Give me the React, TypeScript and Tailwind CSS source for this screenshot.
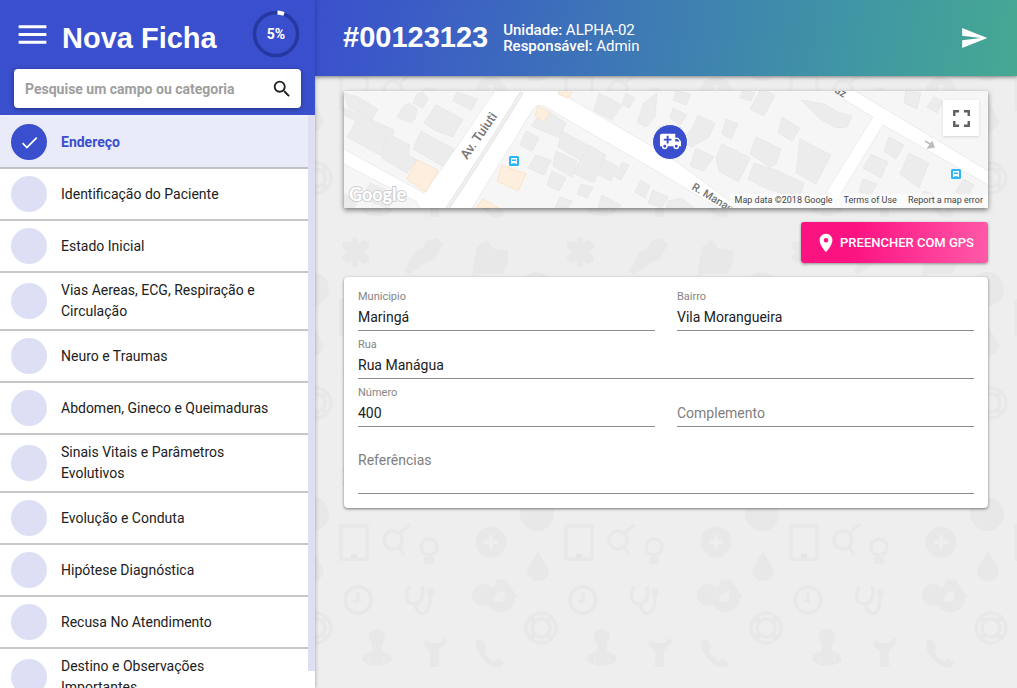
import { useState } from "react"
import { MdCheck, MdFullscreen, MdMenu, MdPlace, MdSearch } from "react-icons/md"

const categories = [
  "Endereço",
  "Identificação do Paciente",
  "Estado Inicial",
  "Vias Aereas, ECG, Respiração e Circulação",
  "Neuro e Traumas",
  "Abdomen, Gineco e Queimaduras",
  "Sinais Vitais e Parâmetros Evolutivos",
  "Evolução e Conduta",
  "Hipótese Diagnóstica",
  "Recusa No Atendimento",
  "Destino e Observações Importantes",
]

const buildings = [
  "0,17 16,24 50,39 42,65 34,63 3,46 12,30 0,24",
  "0,2 14,6 34,18 28,29 4,16",
  "44,43 66,54 64,64 73,69 63,82 38,67 38,60",
  "59,16 65,12 73,18 71,28 67,32 53,26",
  "73,3 79,1 84,8 79,17 69,12",
  "92,14 119,28 113,38 109,46 92,40 80,32",
  "77,40 110,58 100,76 69,58",
  "113,1 134,8 127,19 109,10",
  "26,92 40,98 52,107 44,117 18,108",
  "0,103 14,110 10,117 0,117",
  "192,28 203,20 222,32 216,47 187,35",
  "218,40 247,56 238,70 214,56",
  "182,40 195,47 188,60 176,54",
  "192,64 207,69 200,84 184,77",
  "212,60 233,70 228,86 209,75",
  "245,54 262,64 250,92 229,82",
  "208,80 222,87 215,100 203,94",
  "260,68 274,76 267,90 255,84",
  "278,72 285,74 277,89 271,86",
  "237,93 249,96 243,107 233,103",
  "216,106 228,110 224,117 211,117",
  "258,104 277,114 275,117 254,117",
  "297,89 306,95 301,107 291,101",
  "309,99 324,106 318,117 304,112",
  "255,2 278,14 268,29 250,20",
  "282,2 291,7 285,17 278,13",
  "300,12 313,2 311,26 302,36 293,31",
  "332,0 347,3 342,14 329,9",
  "329,17 343,24 336,34 326,27",
  "354,24 371,32 365,46 348,56 338,51 348,37",
  "382,28 394,33 387,48 378,43",
  "378,53 406,67 399,82 394,91 375,80 372,67",
  "352,57 370,66 359,80 346,75",
  "417,-2 431,4 420,25 406,18",
  "399,-2 411,2 407,10 396,7",
  "438,26 456,37 448,50 434,42",
  "457,9 480,13 494,21 508,25 503,36 492,37 476,28",
  "412,46 437,58 432,73 426,76 406,63",
  "456,48 487,64 472,93 452,82",
  "410,72 432,79 460,92 455,108 424,98 404,88",
  "527,63 544,71 537,87 519,77",
  "545,46 560,54 552,68 540,60",
  "565,62 585,72 575,97 556,83",
  "519,88 533,93 526,106 515,100",
  "580,100 600,108 595,117 570,114",
  "562,-2 577,2 573,18 560,12",
  "590,6 599,10 593,22 583,16",
  "620,88 630,94 622,107 611,101",
  "324,110 338,107 350,117 322,117",
]

const shops = ["73,69 94,79 82,101 63,88", "158,74 182,83 174,100 153,90", "194,15 206,21 200,31 191,25", "139,108 155,117 132,117", "217,-1 229,-1 224,7 214,3"]

function MapDrawing() {
  return (
    <svg viewBox="0 0 644 117" preserveAspectRatio="xMidYMid slice" className="block h-full w-full" aria-hidden="true">
      <rect width="644" height="117" fill="#f6f6f6" />
      <g fill="#ececec" stroke="#e5e5e5" strokeWidth="0.7">
        {buildings.map((points) => (
          <polygon key={points} points={points} />
        ))}
      </g>
      <g fill="#fff" stroke="#e8e8e8" strokeWidth="0.8">
        <path d="M-2 57L80 102L99 76L152 -2H210L326 66L398 119H378L316 82L203 17Q193 10 188 20L127 119H76L73 111L-2 72Z" />
        <path d="M483 -2H508L646 81V95L539 34L487 119H471L529 26Z" />
      </g>
      <path d="M103 118Q145 55 178 1" stroke="#e2e2e2" strokeWidth="4" fill="none" />
      <path d="M103 118Q145 55 178 1" stroke="#f0f0f0" strokeWidth="2.5" fill="none" />
      <g fill="#fdeedd" stroke="#fadfc2" strokeWidth="0.8">
        {shops.map((points) => (
          <polygon key={points} points={points} />
        ))}
      </g>
      <g fill="#757575" fontFamily="Roboto, sans-serif" fontWeight="500" stroke="#fff" strokeWidth="2" paintOrder="stroke">
        <text transform="translate(123 69) rotate(-55)" fontSize="13">Av. Tuiuti</text>
        <text transform="translate(347 98) rotate(31)" fontSize="11">R. Manag</text>
        <text transform="translate(490 1) rotate(31)" fontSize="11">az</text>
      </g>
      <path d="M581 50L586 53M588 51L590 56L584 57Z" stroke="#bdbdbd" strokeWidth="1.5" fill="#bdbdbd" />
      {[
        [165, 65],
        [607, 78],
      ].map(([x, y]) => (
        <g key={x} transform={`translate(${x} ${y})`}>
          <rect width="10" height="10" rx="1.5" fill="#29b6f6" />
          <path d="M2 2H8V8H6.8V7.2H3.2V8H2Z" fill="#fff" />
          <path d="M3 3.500H7V5H3Z" fill="#29b6f6" />
        </g>
      ))}
      <text x="5" y="110" fontSize="18" fontFamily="Lato, sans-serif" fontWeight="700" fill="#fff" stroke="#cfcfcf" strokeWidth="2" paintOrder="stroke">Google</text>
    </svg>
  )
}

function Backdrop() {
  return (
    <svg className="pointer-events-none absolute inset-0 h-full w-full" aria-hidden="true">
      <defs>
        <pattern id="medical" x="23" y="223" width="225" height="225" patternUnits="userSpaceOnUse">
          <g fill="#e8e8e8">
            <path d="M14 15H20L19 21L25 17L31 20V25L26 29L31 34V39L25 41L19 37L20 44H14L15 37L9 40L4 37V33L9 29L4 24V19L10 18L15 21Z" />
            <path d="M99 15L105 21L97 36L88 40L70 52L66 48L76 30L85 24L89 18Z" />
            <path d="M139 24L149 17L155 25L170 28V38L165 51H143L134 54L136 40Z" />
            <circle cx="199" cy="66" r="17" />
            <circle cx="153" cy="94" r="15.500" />
            <path d="M200 103L211 122A11 11 0 1 1 189 122Z" />
            <circle cx="145" cy="147" r="11" />
            <circle cx="163" cy="150" r="14" />
            <path d="M158 131L168 132L179 148L168 161H152Z" />
            <circle cx="39" cy="189" r="8" />
            <path d="M34 195H44V203Q54 205 54 213Q47 218 39 218Q30 218 24 213Q24 205 34 203Z" />
            <path d="M87 192L93 195H100L107 190L109 194L101 203V219H92V203L85 197Z" />
            <path d="M138 194Q143 188 146 194L148 200L146 204Q150 210 156 213L160 210L166 214L164 219Q153 222 145 211Q137 203 138 194Z" />
            <path d="M86 109H96V116H86Z" />
          </g>
          <g fill="none" stroke="#e8e8e8" strokeWidth="3.500">
            <rect x="3" y="78" width="26" height="33" />
            <circle cx="55" cy="92" r="9" />
            <path d="M62 85L72 76M61 99L66 107" />
            <circle cx="91" cy="99" r="8" />
            <circle cx="20" cy="152" r="13" />
            <path d="M20 144V153H15" />
            <path d="M71 138Q64 156 77 156Q87 154 84 138M77 156Q80 168 87 165Q93 160 92 147" />
            <circle cx="92" cy="144" r="2" />
            <circle cx="203" cy="180" r="15" />
            <circle cx="203" cy="180" r="9" />
            <path d="M192 169L198 175M208 185L214 191M192 191L198 185M208 175L214 169" strokeWidth="5" />
          </g>
          <path d="M151 87H155V92H160V96H155V101H151V96H146V92H151Z" fill="#eee" />
          <path d="M158 146L167 143L165 153H156ZM32 208V215M46 208V215" fill="#eee" stroke="#eee" />
          <path d="M13 106H19V110H13Z" fill="#e5e5e5" />
        </pattern>
      </defs>
      <rect width="100%" height="100%" fill="url(#medical)" />
    </svg>
  )
}

function AmbulanceIcon() {
  return (
    <svg viewBox="0 0 24 24" width="23" height="23" fill="currentColor" aria-hidden="true">
      <path d="M18,18.5A1.5,1.5 0 0,0 19.5,17A1.5,1.5 0 0,0 18,15.5A1.5,1.5 0 0,0 16.5,17A1.5,1.5 0 0,0 18,18.5M19.5,9.5H17V12H21.46L19.5,9.5M6,18.5A1.5,1.5 0 0,0 7.5,17A1.5,1.5 0 0,0 6,15.5A1.5,1.5 0 0,0 4.5,17A1.5,1.5 0 0,0 6,18.5M20,8L23,12V17H21A3,3 0 0,1 18,20A3,3 0 0,1 15,17H9A3,3 0 0,1 6,20A3,3 0 0,1 3,17H1V6C1,4.89 1.89,4 3,4H17V8H20M8,6V9H5V11H8V14H10V11H13V9H10V6H8Z" />
    </svg>
  )
}

function SendIcon() {
  return (
    <svg viewBox="0 0 24 24" width="28" height="28" fill="currentColor" aria-hidden="true">
      <path d="M1 3.500L22.500 12L1 20.500V14L17 12L1 10Z" />
    </svg>
  )
}

interface FieldProps {
  id: string
  label: string
  value?: string
  wide?: boolean
}

function Field({ id, label, value, wide }: FieldProps) {
  return (
    <div className={wide ? "col-span-2 pt-2" : "pt-2"}>
      {value ? (
        <label htmlFor={id} className="block h-3 text-[11px] leading-3 text-[#858585]">
          {label}
        </label>
      ) : (
        <div className="h-3" />
      )}
      <input
        id={id}
        defaultValue={value}
        placeholder={label}
        aria-label={label}
        className="block h-7 w-full border-b border-[#8c8c8c] bg-transparent text-sm text-[#212121] outline-none placeholder:text-[#808080]"
      />
    </div>
  )
}

function Sidebar() {
  const [active, setActive] = useState("Endereço")

  return (
    <aside className="z-20 flex h-full w-[315px] shrink-0 flex-col bg-white shadow-[0_0_4px_rgba(0,0,0,0.35)]">
      <div className="shrink-0 bg-[#3a4fcd] px-[14px] pt-[10px] pb-[7px]">
        <div className="flex h-12 items-center">
          <button aria-label="Menu" className="text-white">
            <MdMenu size={37} />
          </button>
          <h1 className="ml-[11px] pt-2 font-['Liberation_Sans'] text-[29px] leading-9 font-bold text-white">Nova Ficha</h1>
          <div className="relative mr-[1px] ml-auto flex h-12 w-12 items-center justify-center">
            <svg viewBox="0 0 48 48" className="absolute inset-0" aria-hidden="true">
              <circle cx="24" cy="24" r="21.500" fill="none" stroke="#26389f" strokeWidth="3.500" />
              <path d="M25.500 2.600A21.500 21.500 0 0 1 32 4" fill="none" stroke="#fff" strokeWidth="4" />
            </svg>
            <span className="relative text-sm font-bold text-white">5%</span>
          </div>
        </div>
        <div className="mt-[11px] flex h-[39px] items-center rounded-sm bg-white pr-2 pl-[11px] shadow-[0_1px_4px_rgba(0,0,0,0.4)]">
          <input
            type="search"
            aria-label="Pesquise um campo ou categoria"
            placeholder="Pesquise um campo ou categoria"
            className="min-w-0 flex-1 text-sm font-bold outline-none placeholder:text-[#9e9e9e]"
          />
          <button aria-label="Pesquisar" className="text-[#212121]">
            <MdSearch size={22} />
          </button>
        </div>
      </div>
      <div className="flex min-h-0 flex-1">
        <ul className="min-w-0 flex-1 overflow-y-auto border-t-2 border-[#eceef9] [scrollbar-width:none]">
          {categories.map((name) => (
            <li key={name}>
              <button
                onClick={() => setActive(name)}
                className={
                  name === active
                    ? "flex min-h-[52px] w-full items-center gap-[14px] border-b-2 border-[#bfc1c6] bg-[#e9ebf8] px-[11px] py-[7px] text-left font-bold text-[#3a4fcd]"
                    : "flex min-h-[52px] w-full items-center gap-[14px] border-b-2 border-[#c6c7ca] px-[11px] py-[7px] text-left text-[#212121]"
                }
              >
                <span
                  className={
                    name === active
                      ? "flex h-9 w-9 shrink-0 items-center justify-center rounded-full bg-[#3a4fcd] text-white"
                      : "h-9 w-9 shrink-0 rounded-full bg-[#dde0f5]"
                  }
                >
                  {name === active && <MdCheck size={21} />}
                </span>
                <span className="pr-6 text-sm leading-[21px]">{name}</span>
              </button>
            </li>
          ))}
        </ul>
        <div className="w-[7px] bg-white">
          <div className="h-[97%] bg-[#dfdff4]" />
        </div>
      </div>
    </aside>
  )
}

export default function App() {
  return (
    <div className="flex h-screen overflow-hidden bg-[#eee] font-['Roboto',sans-serif]">
      <Sidebar />
      <div className="relative flex min-w-0 flex-1 flex-col">
        <Backdrop />
        <header className="relative z-10 flex h-[76px] shrink-0 items-center bg-linear-[100deg,#3a4fcd,#4095a5_75%,#45a992] px-7 text-white shadow-[0_1px_4px_rgba(0,0,0,0.5)]">
          <h2 className="font-['Liberation_Sans'] text-[29px] font-bold">#00123123</h2>
          <div className="ml-[15px] text-[15px] leading-4">
            <p>
              <b className="font-medium">Unidade:</b> ALPHA-02
            </p>
            <p>
              <b className="font-medium">Responsável:</b> Admin
            </p>
          </div>
          <button aria-label="Enviar" className="ml-auto">
            <SendIcon />
          </button>
        </header>

        <main className="relative min-h-0 flex-1 overflow-y-auto px-[29px] pt-[15px]">
          <section aria-label="Mapa" className="relative h-[117px] shadow-[0_2px_5px_rgba(0,0,0,0.5)]">
            <MapDrawing />
            <div className="absolute top-1/2 left-1/2 -mt-2 ml-1 flex h-9 w-9 -translate-x-1/2 -translate-y-1/2 items-center justify-center rounded-full border border-white bg-[#3a4fcd] text-white">
              <AmbulanceIcon />
            </div>
            <button
              aria-label="Tela cheia"
              className="absolute top-[9px] right-[9px] flex h-9 w-9 items-center justify-center bg-white text-[#616161] shadow-sm"
            >
              <MdFullscreen size={29} />
            </button>
            <div className="absolute right-0 bottom-0 flex h-[14px] items-center gap-[11px] bg-white/60 px-[5px] text-[9px] text-[#444]">
              <span>Map data ©2018 Google</span>
              <a href="#terms">Terms of Use</a>
              <a href="#report">Report a map error</a>
            </div>
          </section>

          <div className="mt-[14px] flex justify-end">
            <button className="flex h-[41px] items-center gap-[3px] rounded-[3px] bg-linear-[100deg,#fc1382_30%,#ff5ba9] px-[14px] text-[13px] font-medium text-white shadow-[0_1px_3px_rgba(0,0,0,0.4)]">
              <MdPlace size={22} />
              PREENCHER COM GPS
            </button>
          </div>

          <form className="mt-[14px] grid grid-cols-2 gap-x-[22px] rounded bg-white px-[14px] pt-[6px] pb-[14px] shadow-[0_1px_3px_rgba(0,0,0,0.5)]">
            <Field id="municipio" label="Municipio" value="Maringá" />
            <Field id="bairro" label="Bairro" value="Vila Morangueira" />
            <Field id="rua" label="Rua" value="Rua Manágua" wide />
            <Field id="numero" label="Número" value="400" />
            <Field id="complemento" label="Complemento" />
            <textarea
              aria-label="Referências"
              placeholder="Referências"
              className="col-span-2 mt-5 block h-[47px] resize-none border-b border-[#8c8c8c] pt-[3px] text-sm leading-5 outline-none placeholder:text-[#808080]"
            />
          </form>
        </main>
      </div>
    </div>
  )
}
